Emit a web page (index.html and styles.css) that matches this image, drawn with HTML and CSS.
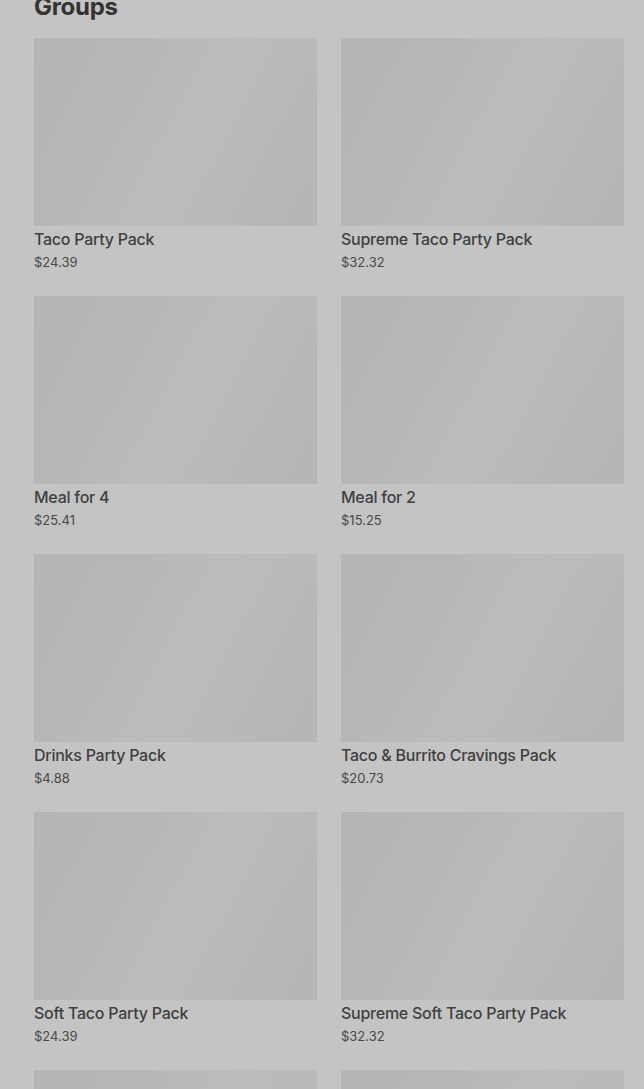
FILE: index.html
```html
<!DOCTYPE html>
<html lang="en">
<head>
    <meta charset="UTF-8">
    <meta name="viewport" content="width=device-width, initial-scale=1.0">
    <title>Groups</title>
    <link rel="stylesheet" href="styles.css">
</head>
<body>
<div class="section">
    <h2 class="section-title">Groups</h2>
    <div class="grid">
        <div class="card">
            <div class="thumb"></div>
            <div class="name">Taco Party Pack</div>
            <div class="price">$24.39</div>
        </div>
        <div class="card">
            <div class="thumb"></div>
            <div class="name">Supreme Taco Party Pack</div>
            <div class="price">$32.32</div>
        </div>
        <div class="card">
            <div class="thumb"></div>
            <div class="name">Meal for 4</div>
            <div class="price">$25.41</div>
        </div>
        <div class="card">
            <div class="thumb"></div>
            <div class="name">Meal for 2</div>
            <div class="price">$15.25</div>
        </div>
        <div class="card">
            <div class="thumb"></div>
            <div class="name">Drinks Party Pack</div>
            <div class="price">$4.88</div>
        </div>
        <div class="card">
            <div class="thumb"></div>
            <div class="name">Taco &amp; Burrito Cravings Pack</div>
            <div class="price">$20.73</div>
        </div>
        <div class="card">
            <div class="thumb"></div>
            <div class="name">Soft Taco Party Pack</div>
            <div class="price">$24.39</div>
        </div>
        <div class="card">
            <div class="thumb"></div>
            <div class="name">Supreme Soft Taco Party Pack</div>
            <div class="price">$32.32</div>
        </div>
        <div class="card">
            <div class="thumb"></div>
        </div>
        <div class="card">
            <div class="thumb"></div>
        </div>
    </div>
</div>
</body>
</html>
```

FILE: styles.css
```css
body {
    margin: 0;
    padding: 0;
    background-color: #c4c4c4;
    font-family: Inter, "Liberation Sans", Arial, sans-serif;
    overflow: hidden;
}
.section {
    padding: 0 20px 0 34px;
    margin-top: -7px; /* page is scrolled a little */
}
.section-title {
    font-size: 24px;
    line-height: 28px;
    font-weight: 700;
    color: #333333;
    margin: 0 0 17px 0;
    letter-spacing: -0.3px;
}
.grid {
    display: grid;
    grid-template-columns: 1fr 1fr;
    column-gap: 24px;
    row-gap: 24px;
}
.thumb {
    height: 188px;
    background: linear-gradient(118deg, #b5b5b5 0%, #b7b7b7 30%, #bcbcbc 55%, #b8b8b8 78%, #b5b5b5 100%);
}
.name {
    font-size: 16px;
    line-height: 20px;
    font-weight: 500;
    color: #404040;
    margin-top: 3px;
    letter-spacing: -0.25px;
}
.price {
    font-size: 13px;
    line-height: 20px;
    color: #4a4a4a;
    margin-top: 3px;
}
```
